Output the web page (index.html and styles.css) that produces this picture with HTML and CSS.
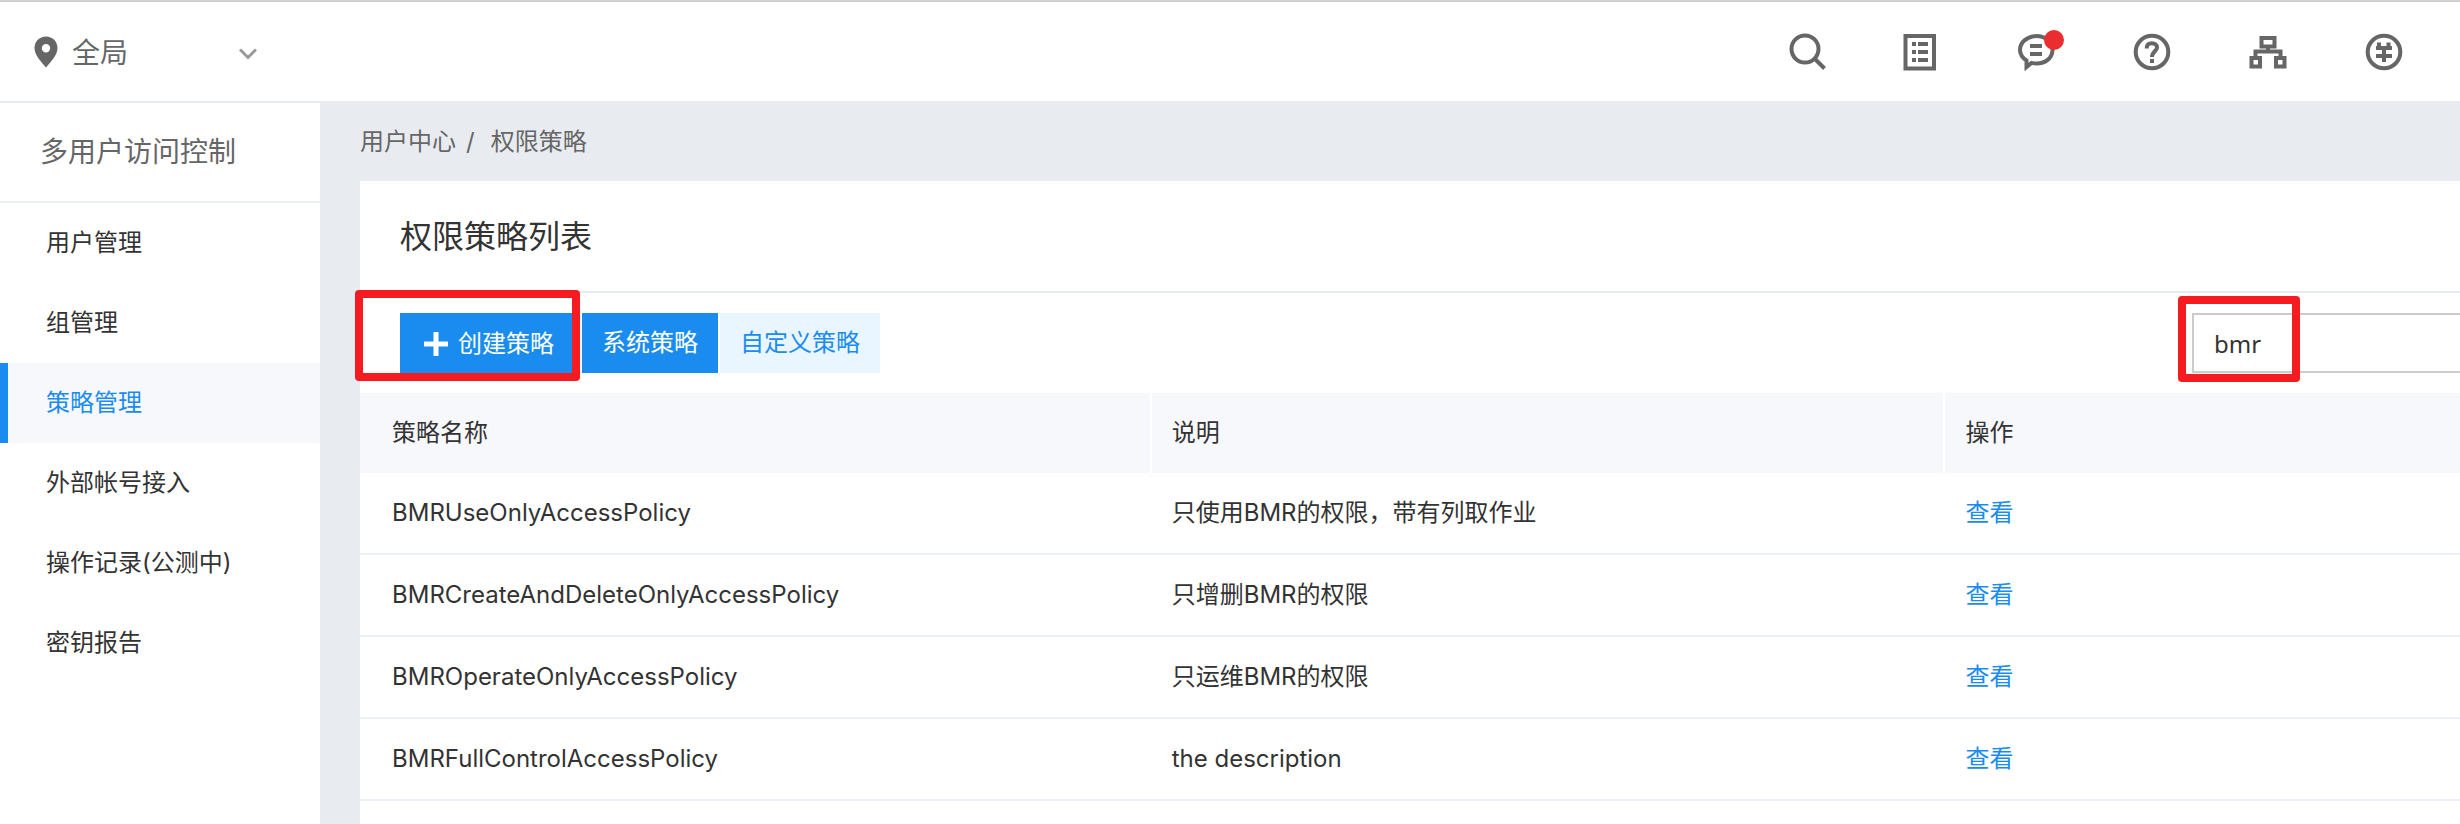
FILE: index.html
```
<!DOCTYPE html>
<html lang="zh-CN">
<head>
    <meta charset="UTF-8">
    <title>权限策略</title>
    <link rel="stylesheet" href="styles.css">
</head>
<body>
    <header class="topbar">
        <div class="region">
            <svg class="region-pin" viewBox="0 0 24 32" aria-hidden="true">
                <path fill-rule="evenodd" d="M12 0.5C5.4 0.5 0.5 5.6 0.5 12c0 7 6.5 13.500 11.500 19.500C17 25.500 23.500 19 23.500 12 23.500 5.600 18.600 0.500 12 0.500zM12 8a4.200 4.200 0 1 1 0 8.400 4.200 4.200 0 0 1 0-8.400z"/>
            </svg>
            <select class="region-select" aria-label="区域">
                <option>全局</option>
            </select>
            <svg class="region-arrow" viewBox="0 0 18 12" aria-hidden="true">
                <path d="M1 1.500l8 8 8-8"/>
            </svg>
        </div>
        <nav class="tools">
            <button class="tool" aria-label="搜索">
                <svg viewBox="0 0 36 36">
                    <circle cx="19" cy="15" r="13.500"/>
                    <path d="M28.500 24.500l10 10"/>
                </svg>
            </button>
            <button class="tool" aria-label="列表">
                <svg viewBox="0 0 36 36">
                    <path d="M3.500 2h28.500v32.500H3.500z"/>
                    <path d="M10 10h4M16 10h10M10 18h4M16 18h10M10 26h4M16 26h10"/>
                </svg>
            </button>
            <button class="tool" aria-label="消息">
                <svg viewBox="0 0 36 36">
                    <path d="M8.500 33V26.500C4.500 23.800 2 20 2 16 2 8.300 9.200 2 18.500 2S34.500 8.300 34.500 16 27.800 29.500 18.500 29.500c-1.800 0-3.500-.2-5-.600z"/>
                    <path d="M12 12h12M12 20h12"/>
                </svg>
                <span class="dot"></span>
            </button>
            <button class="tool" aria-label="帮助">
                <svg viewBox="0 0 36 36">
                    <circle cx="18" cy="18" r="16.300"/>
                    <path d="M12.800 14.500v-1c0-2.600 2-4.300 5-4.300s5.200 1.700 5.200 4.300c0 3.800-5 4-5 9.500M16 27h4"/>
                </svg>
            </button>
            <button class="tool" aria-label="组织">
                <svg viewBox="0 0 36 36">
                    <path d="M11.500 4h13v8.500h-13zM18 12.500v5M5.500 24v-6.500h25V24M1.500 24h8.500v8.500H1.500zM26 24h8.500v8.500H26z"/>
                </svg>
            </button>
            <button class="tool" aria-label="财务">
                <svg viewBox="0 0 36 36">
                    <circle cx="18" cy="18" r="16.300"/>
                    <path d="M13 8.500V14M22.500 8.500V14M10 14h16M10 22h16M18 14v14"/>
                </svg>
            </button>
        </nav>
    </header>

    <div class="layout">
        <aside class="sidebar">
            <h2 class="sidebar-title">多用户访问控制</h2>
            <nav class="menu">
                <a href="#" class="menu-item">用户管理</a>
                <a href="#" class="menu-item">组管理</a>
                <a href="#" class="menu-item active">策略管理</a>
                <a href="#" class="menu-item">外部帐号接入</a>
                <a href="#" class="menu-item">操作记录(公测中)</a>
                <a href="#" class="menu-item">密钥报告</a>
            </nav>
        </aside>

        <main class="content">
            <div class="breadcrumb">
                <a href="#">用户中心</a>
                <span class="sep">/</span>
                <span>权限策略</span>
            </div>

            <section class="panel">
                <h1 class="panel-title">权限策略列表</h1>

                <div class="toolbar">
                    <div class="marked mark-create">
                        <button class="btn btn-create">
                            <svg class="plus" viewBox="0 0 24 24" aria-hidden="true"><path d="M12 0v24M0 12h24"/></svg>
                            创建策略
                        </button>
                    </div>
                    <div class="tabs">
                        <button class="btn">系统策略</button>
                        <button class="btn btn-light">自定义策略</button>
                    </div>
                    <div class="marked mark-search">
                        <input class="search" type="text" value="bmr" aria-label="搜索策略">
                    </div>
                </div>

                <table class="policy-table">
                    <thead>
                        <tr>
                            <th>策略名称</th>
                            <th>说明</th>
                            <th>操作</th>
                        </tr>
                    </thead>
                    <tbody>
                        <tr>
                            <td>BMRUseOnlyAccessPolicy</td>
                            <td>只使用BMR的权限，带有列取作业</td>
                            <td><a href="#">查看</a></td>
                        </tr>
                        <tr>
                            <td>BMRCreateAndDeleteOnlyAccessPolicy</td>
                            <td>只增删BMR的权限</td>
                            <td><a href="#">查看</a></td>
                        </tr>
                        <tr>
                            <td>BMROperateOnlyAccessPolicy</td>
                            <td>只运维BMR的权限</td>
                            <td><a href="#">查看</a></td>
                        </tr>
                        <tr>
                            <td>BMRFullControlAccessPolicy</td>
                            <td>the description</td>
                            <td><a href="#">查看</a></td>
                        </tr>
                    </tbody>
                </table>
            </section>
        </main>
    </div>
</body>
</html>
```
FILE: styles.css
```
*,
*::after {
    box-sizing: border-box;
}

body {
    display: flex;
    flex-direction: column;
    min-height: 100vh;
    margin: 0;
    font-family: Inter, "Noto Sans CJK SC", sans-serif;
    font-size: 24px;
    line-height: 36px;
    color: #333;
    background-color: #e8ecf0;
}

a {
    color: #1a8cf0;
    text-decoration: none;
}

button,
input,
select {
    font: inherit;
}

/* Top bar */
.topbar {
    display: flex;
    justify-content: space-between;
    align-items: center;
    height: 103px;
    padding: 0 58px 0 34px;
    background-color: #fff;
    border-top: 2px solid #d0d0d0;
    border-bottom: 2px solid #e8ecf0;
}

.region {
    display: flex;
    align-items: center;
}

.region-pin {
    width: 24px;
    height: 32px;
    fill: #666;
}

.region-select {
    width: 166px;
    margin-left: 14px;
    padding: 2px 0 0;
    border: none;
    background: none;
    appearance: none;
    font-size: 28px;
    line-height: 40px;
    color: #666;
}

.region-arrow {
    width: 18px;
    height: 12px;
    margin-top: 4px;
    margin-left: 1px;
    fill: none;
    stroke: #999;
    stroke-width: 3;
}

.tools {
    display: flex;
    gap: 80px;
}

.tool {
    position: relative;
    display: flex;
    padding: 0;
    border: none;
    background: none;
    cursor: pointer;
}

.tool svg {
    width: 36px;
    height: 36px;
    overflow: visible;
    fill: none;
    stroke: #666;
    stroke-width: 4;
}

.dot {
    position: absolute;
    top: -4px;
    right: -10px;
    width: 20px;
    height: 20px;
    border-radius: 50%;
    background-color: #eb2d30;
}

.layout {
    display: flex;
    flex: 1;
}

/* Sidebar */
.sidebar {
    flex: 0 0 320px;
    background-color: #fff;
}

.sidebar-title {
    margin: 0;
    padding: 29px 40px;
    border-bottom: 2px solid #ebeef5;
    font-size: 28px;
    font-weight: normal;
    line-height: 40px;
    color: #666;
}

.menu {
    display: flex;
    flex-direction: column;
}

.menu-item {
    padding: 22px 38px;
    border-left: 8px solid transparent;
    color: #333;
}

.menu-item.active {
    border-left-color: #1a8cf0;
    background-color: #f7f8fc;
    color: #1a8cf0;
}

/* Content */
.content {
    display: flex;
    flex-direction: column;
    flex: 1;
    min-width: 0;
    padding-left: 40px;
}

.breadcrumb {
    display: flex;
    padding: 21px 0;
    color: #666;
}

.breadcrumb a {
    color: inherit;
}

.sep {
    margin: 0 16px 0 10px;
}

.panel {
    flex: 1;
    background-color: #fff;
}

.panel-title {
    margin: 0;
    padding: 32px 40px 30px;
    border-bottom: 2px solid #e8ecf0;
    font-size: 32px;
    font-weight: normal;
    line-height: 48px;
}

.toolbar {
    display: flex;
    padding: 20px 0 20px 40px;
}

.tabs {
    display: flex;
    gap: 2px;
    margin-left: 4px;
}

.btn {
    display: flex;
    align-items: center;
    height: 60px;
    padding: 0 20px;
    border: none;
    background-color: #1a8cf0;
    color: #fff;
    cursor: pointer;
}

.btn-light {
    background-color: #e9f6ff;
    color: #1a8cf0;
}

.btn-create {
    gap: 10px;
    padding: 2px 24px 0;
}

.plus {
    width: 24px;
    height: 24px;
    stroke: #fff;
    stroke-width: 5;
}

.search {
    display: block;
    width: 268px;
    height: 60px;
    padding: 0 20px;
    border: 2px solid #ccc;
    border-right: none;
    border-radius: 0;
    outline: none;
    font-family: "Noto Sans", sans-serif;
    color: #333;
}

/* Red highlight frames */
.marked {
    position: relative;
}

.marked::after {
    content: "";
    position: absolute;
    border: 8px solid #f41c20;
    border-radius: 4px;
    pointer-events: none;
}

.mark-create::after {
    inset: -23px -2px -8px -45px;
    z-index: 1;
}

.mark-search {
    margin-left: auto;
}

.mark-search::after {
    top: -17px;
    left: -14px;
    width: 122px;
    height: 86px;
}

/* Table */
.policy-table {
    width: 100%;
    border-collapse: separate;
    border-spacing: 0;
    table-layout: fixed;
}

.policy-table th,
.policy-table td {
    padding: 22px 20px;
    text-align: left;
    font-weight: normal;
}

.policy-table th {
    background-color: #f7f8fc;
    border-right: 2px solid #fff;
}

.policy-table th:first-child,
.policy-table td:first-child {
    width: 37.7%;
    padding-left: 32px;
}

.policy-table th:nth-child(2) {
    width: 37.8%;
}

.policy-table th:last-child {
    border-right: none;
}

.policy-table td {
    border-bottom: 2px solid #ebeff9;
}
```
